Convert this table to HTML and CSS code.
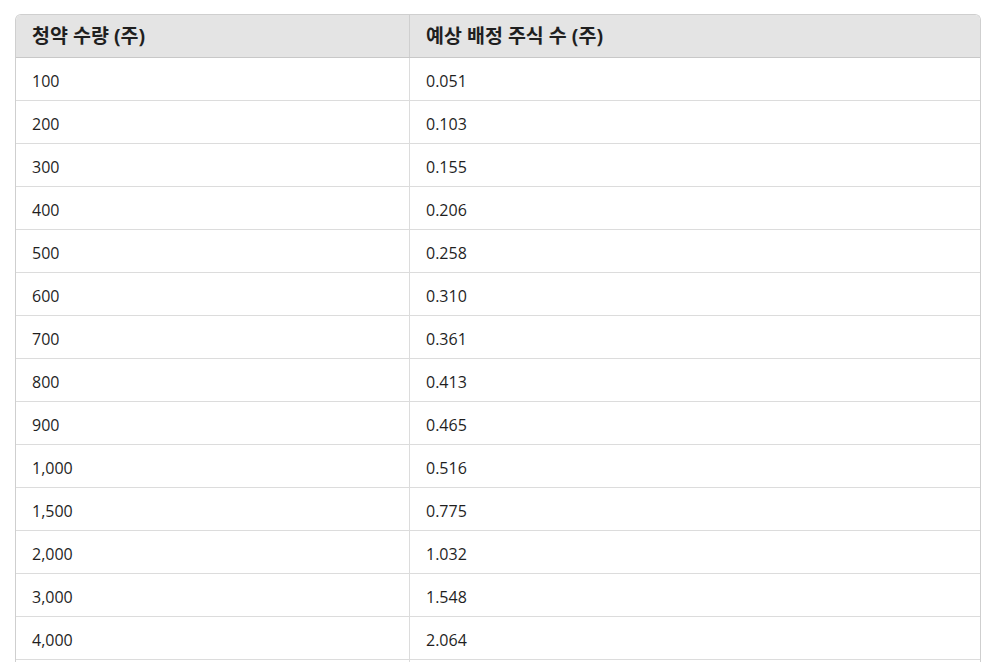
FILE: index.html
```html
<!DOCTYPE html>
<html lang="ko">
<head>
<meta charset="utf-8">
<link rel="stylesheet" href="styles.css">
</head>
<body>
<div class="wrap">
<table class="tbl">
<thead>
<tr><th class="c1">청약 수량 (주)</th><th>예상 배정 주식 수 (주)</th></tr>
</thead>
<tbody>
<tr><td class="c1">100</td><td>0.051</td></tr>
<tr><td class="c1">200</td><td>0.103</td></tr>
<tr><td class="c1">300</td><td>0.155</td></tr>
<tr><td class="c1">400</td><td>0.206</td></tr>
<tr><td class="c1">500</td><td>0.258</td></tr>
<tr><td class="c1">600</td><td>0.310</td></tr>
<tr><td class="c1">700</td><td>0.361</td></tr>
<tr><td class="c1">800</td><td>0.413</td></tr>
<tr><td class="c1">900</td><td>0.465</td></tr>
<tr><td class="c1">1,000</td><td>0.516</td></tr>
<tr><td class="c1">1,500</td><td>0.775</td></tr>
<tr><td class="c1">2,000</td><td>1.032</td></tr>
<tr><td class="c1">3,000</td><td>1.548</td></tr>
<tr><td class="c1">4,000</td><td>2.064</td></tr>
<tr><td class="c1"></td><td></td></tr>
</tbody>
</table>
</div>
</body>
</html>
```
FILE: styles.css
```css
html, body {
  margin: 0;
  padding: 0;
  background: #ffffff;
}
body {
  font-family: "Open Sans", "Noto Sans CJK KR", sans-serif;
  font-size: 16px;
  color: #1f1f1f;
}
.wrap {
  margin: 14px 26px 0 15px;
  border: 1px solid #cfcfcf;
  border-bottom: none;
  border-radius: 6px 6px 0 0;
  overflow: hidden;
}
.tbl {
  width: 100%;
  border-collapse: collapse;
  table-layout: fixed;
}
.tbl th, .tbl td {
  text-align: left;
  padding: 11px 16px 7px;
  line-height: 24px;
  height: 24px;
}
.tbl th {
  background: #e4e4e4;
  font-weight: 700;
  font-size: 19.5px;
  padding: 9px 16px;
  border-bottom: 1px solid #c8c8c8;
}
.tbl td {
  border-bottom: 1px solid #dcdcdc;
}
.tbl .c1 {
  width: 361px;
  border-right: 1px solid #dcdcdc;
}
.tbl th.c1 {
  border-right-color: #cfcfcf;
}
```
